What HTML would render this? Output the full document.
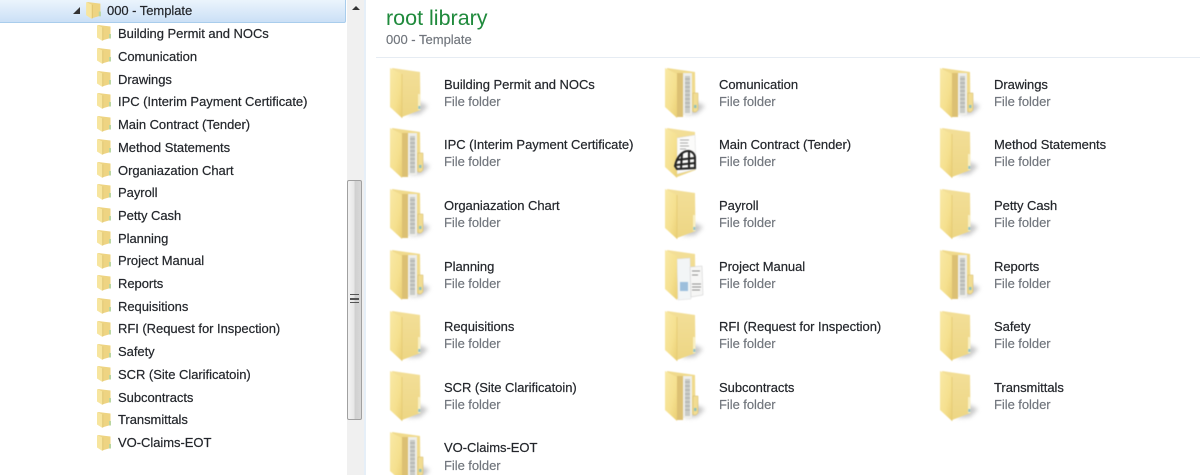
<!DOCTYPE html>
<html><head><meta charset="utf-8">
<style>
html,body{margin:0;padding:0;background:#fff;width:1200px;height:475px;overflow:hidden}
body{position:relative;font-family:"Liberation Sans",sans-serif;}
.t,.n{position:absolute;font-size:13px;line-height:16px;color:#23262b;white-space:nowrap;filter:blur(.3px);letter-spacing:-.04px;-webkit-text-stroke:.2px #23262b;margin-top:1px}
.t{left:118px}
.s{position:absolute;font-size:13px;line-height:16px;color:#70757c;white-space:nowrap;filter:blur(.3px);letter-spacing:-.05px;-webkit-text-stroke:.15px #70757c;margin-top:1px}
svg.f{position:absolute;width:48px;height:54px;filter:blur(.4px)}
svg.m{position:absolute;width:18px;height:18px;filter:blur(.3px)}
</style></head><body>
<svg width="0" height="0" style="position:absolute">
<defs>
<linearGradient id="b" x1="0" x2="0" y1="0" y2="1"><stop offset="0" stop-color="#f3df98"/><stop offset="1" stop-color="#edd684"/></linearGradient>
<linearGradient id="g" x1="0" x2="1" y1="0" y2="1"><stop offset="0" stop-color="#f9e9a6"/><stop offset=".6" stop-color="#f5e08f"/><stop offset="1" stop-color="#eacf74"/></linearGradient>
<filter id="bl" x="-50%" y="-50%" width="200%" height="200%"><feGaussianBlur stdDeviation="2.200"/></filter>
<symbol id="plain" viewBox="0 0 48 54">
<path d="M30 34L41 39L33 47L20 48Z" fill="#9a9a9a" opacity=".55" filter="url(#bl)"/>
<path d="M5 1L33 5L33.500 43L15 50Z" fill="url(#b)"/>
<rect x="31" y="27" width="2.500" height="16" fill="#f9f0c4"/><rect x="31.300" y="39" width="2" height="3" fill="#8fc0c8"/>
<path d="M3 1L15 7L15 51L3 40Z" fill="url(#g)"/>
<path d="M15 7L15 51" stroke="#e4ca74" stroke-width=".8"/>
</symbol>
<symbol id="paper" viewBox="0 0 48 54">
<path d="M32 34L43 39L35 47L22 48Z" fill="#9a9a9a" opacity=".55" filter="url(#bl)"/>
<path d="M5 1L33 5L33.500 43L15 50Z" fill="#f0da8c"/>
<rect x="15" y="6" width="6" height="44" fill="#dcc073"/>
<rect x="21" y="6" width="9" height="42" fill="#eeeeea"/>
<rect x="23" y="9" width="5" height="37" fill="#c9cbc6"/>
<path d="M23 12h5M23 16h5M23 20h5M23 24h5M23 28h5M23 32h5M23 36h5M23 40h5" stroke="#a5a7a2" stroke-width=".8"/>
<path d="M31 26h5v17l-2 2h-3z" fill="#f1dc92" stroke="#d2b868" stroke-width=".5"/><rect x="32" y="38" width="2.500" height="3" fill="#8fc0b8"/>
<path d="M3 1L15 7L15 51L3 40Z" fill="url(#g)"/>
</symbol>
<symbol id="draw" viewBox="0 0 48 54">
<path d="M5 1L33 5L33.500 43L15 50Z" fill="url(#b)"/>
<path d="M15 11L33 8L34 42L15 47Z" fill="#fbfbfa" stroke="#ddd" stroke-width=".5"/>
<path d="M18 13h9M18 16h8M18 19h9M18 22h6" stroke="#aaa" stroke-width="1"/>
<path d="M3 1L15 7L15 51L3 40Z" fill="url(#g)"/>
<g fill="none" stroke="#222" stroke-width="2">
<path d="M13 39C15 29 21 24 26 24C30 24 33 27 33 31L33 41L15 42Z"/>
<path d="M20 26L19 42M27 24L27 41M14 33L33 31M14 38L33 36"/>
</g>
</symbol>
<symbol id="docs" viewBox="0 0 48 54">
<path d="M5 1L33 5L33.500 43L15 50Z" fill="url(#b)"/>
<path d="M15 10L28 9L29 50L16 51Z" fill="#f2f5f6" stroke="#ddd" stroke-width=".5"/>
<rect x="18" y="33" width="8" height="9" fill="#9dbfdc"/>
<path d="M28 18L40 17L41 46L29 48Z" fill="#f6f6f5" stroke="#ccc" stroke-width=".5"/>
<path d="M30 22h8M30 26h6M30 35h9M30 38h9M30 41h8" stroke="#8f8f8f" stroke-width="1"/>
<path d="M3 1L15 7L15 51L3 40Z" fill="url(#g)"/>
</symbol>
<symbol id="small" viewBox="0 0 18 18">
<path d="M3 1L15.500 2.500L15.500 14L7 16.500Z" fill="#eed482"/>
<path d="M2 1L7.500 3.500V17L2 13.500Z" fill="#f7e59e"/>
<path d="M7.800 3.500V16.500" stroke="#dcc06c" stroke-width=".8"/>
<rect x="14" y="10" width="2" height="4.500" fill="#b9d6a0"/>
</symbol>
</defs>
</svg>

<!-- tree -->
<div style="position:absolute;left:-2px;top:-3px;width:346px;height:24px;border:1px solid #a9cdec;border-radius:2px;background:linear-gradient(#eef6fd,#cbe0f6)"></div>
<div style="position:absolute;left:73px;top:7px;width:0;height:0;border-left:7px solid transparent;border-bottom:7px solid #333"></div>
<svg class="m" style="left:84px;top:1px;width:19px;height:19px"><use href="#small"/></svg>
<div class="t" style="left:107px;top:2px">000 - Template</div>

<svg class="m" style="left:95px;top:24px"><use href="#small"/></svg><div class="t" style="top:25px">Building Permit and NOCs</div>
<svg class="m" style="left:95px;top:47px"><use href="#small"/></svg><div class="t" style="top:48px">Comunication</div>
<svg class="m" style="left:95px;top:70px"><use href="#small"/></svg><div class="t" style="top:71px">Drawings</div>
<svg class="m" style="left:95px;top:92px"><use href="#small"/></svg><div class="t" style="top:93px">IPC (Interim Payment Certificate)</div>
<svg class="m" style="left:95px;top:115px"><use href="#small"/></svg><div class="t" style="top:116px">Main Contract (Tender)</div>
<svg class="m" style="left:95px;top:138px"><use href="#small"/></svg><div class="t" style="top:139px">Method Statements</div>
<svg class="m" style="left:95px;top:161px"><use href="#small"/></svg><div class="t" style="top:162px">Organiazation Chart</div>
<svg class="m" style="left:95px;top:183px"><use href="#small"/></svg><div class="t" style="top:184px">Payroll</div>
<svg class="m" style="left:95px;top:206px"><use href="#small"/></svg><div class="t" style="top:207px">Petty Cash</div>
<svg class="m" style="left:95px;top:229px"><use href="#small"/></svg><div class="t" style="top:230px">Planning</div>
<svg class="m" style="left:95px;top:252px"><use href="#small"/></svg><div class="t" style="top:252px">Project Manual</div>
<svg class="m" style="left:95px;top:274px"><use href="#small"/></svg><div class="t" style="top:275px">Reports</div>
<svg class="m" style="left:95px;top:297px"><use href="#small"/></svg><div class="t" style="top:298px">Requisitions</div>
<svg class="m" style="left:95px;top:320px"><use href="#small"/></svg><div class="t" style="top:320px">RFI (Request for Inspection)</div>
<svg class="m" style="left:95px;top:343px"><use href="#small"/></svg><div class="t" style="top:343px">Safety</div>
<svg class="m" style="left:95px;top:365px"><use href="#small"/></svg><div class="t" style="top:366px">SCR (Site Clarificatoin)</div>
<svg class="m" style="left:95px;top:388px"><use href="#small"/></svg><div class="t" style="top:389px">Subcontracts</div>
<svg class="m" style="left:95px;top:411px"><use href="#small"/></svg><div class="t" style="top:411px">Transmittals</div>
<svg class="m" style="left:95px;top:434px"><use href="#small"/></svg><div class="t" style="top:434px">VO-Claims-EOT</div>

<!-- scrollbar -->
<div style="position:absolute;left:347px;top:0;width:17px;height:475px;background:#f0f0f0"></div>
<div style="position:absolute;left:352px;top:6px;width:0;height:0;border-left:4px solid transparent;border-right:4px solid transparent;border-bottom:4px solid #333"></div>
<div style="position:absolute;left:347px;top:180px;width:13px;height:238px;border:1px solid #a0a0a0;border-radius:2px;background:linear-gradient(90deg,#f2f2f2,#e8e8e8 45%,#d0d0d0 55%,#d8d8d8);filter:blur(.3px)"></div>
<div style="position:absolute;left:350px;top:294px;width:9px;height:9px;border-top:1.500px solid #555;border-bottom:1.500px solid #555;box-sizing:border-box"></div>
<div style="position:absolute;left:350px;top:298px;width:9px;height:1.500px;background:#555"></div>
<div style="position:absolute;left:364px;top:0;width:2px;height:475px;background:#e6eff8"></div>

<!-- header -->
<div style="position:absolute;left:386px;top:5px;font-size:21.500px;line-height:26px;color:#1f8a3c;white-space:nowrap;filter:blur(.3px)">root library</div>
<div class="s" style="left:386px;top:31px;letter-spacing:0">000 - Template</div>
<div style="position:absolute;left:376px;top:57px;width:824px;height:1px;background:#e6ecf3"></div>

<!-- items -->
<svg class="f" style="left:387px;top:67px"><use href="#plain"/></svg><div class="n" style="left:444px;top:76px">Building Permit and NOCs</div><div class="s" style="left:444px;top:93px">File folder</div>
<svg class="f" style="left:662px;top:67px"><use href="#paper"/></svg><div class="n" style="left:719px;top:76px">Comunication</div><div class="s" style="left:719px;top:93px">File folder</div>
<svg class="f" style="left:937px;top:67px"><use href="#paper"/></svg><div class="n" style="left:994px;top:76px">Drawings</div><div class="s" style="left:994px;top:93px">File folder</div>

<svg class="f" style="left:387px;top:127px"><use href="#paper"/></svg><div class="n" style="left:444px;top:136px">IPC (Interim Payment Certificate)</div><div class="s" style="left:444px;top:153px">File folder</div>
<svg class="f" style="left:662px;top:127px"><use href="#draw"/></svg><div class="n" style="left:719px;top:136px">Main Contract (Tender)</div><div class="s" style="left:719px;top:153px">File folder</div>
<svg class="f" style="left:937px;top:127px"><use href="#plain"/></svg><div class="n" style="left:994px;top:136px">Method Statements</div><div class="s" style="left:994px;top:153px">File folder</div>

<svg class="f" style="left:387px;top:188px"><use href="#paper"/></svg><div class="n" style="left:444px;top:197px">Organiazation Chart</div><div class="s" style="left:444px;top:214px">File folder</div>
<svg class="f" style="left:662px;top:188px"><use href="#plain"/></svg><div class="n" style="left:719px;top:197px">Payroll</div><div class="s" style="left:719px;top:214px">File folder</div>
<svg class="f" style="left:937px;top:188px"><use href="#plain"/></svg><div class="n" style="left:994px;top:197px">Petty Cash</div><div class="s" style="left:994px;top:214px">File folder</div>

<svg class="f" style="left:387px;top:249px"><use href="#paper"/></svg><div class="n" style="left:444px;top:258px">Planning</div><div class="s" style="left:444px;top:275px">File folder</div>
<svg class="f" style="left:662px;top:249px"><use href="#docs"/></svg><div class="n" style="left:719px;top:258px">Project Manual</div><div class="s" style="left:719px;top:275px">File folder</div>
<svg class="f" style="left:937px;top:249px"><use href="#paper"/></svg><div class="n" style="left:994px;top:258px">Reports</div><div class="s" style="left:994px;top:275px">File folder</div>

<svg class="f" style="left:387px;top:310px"><use href="#plain"/></svg><div class="n" style="left:444px;top:318px">Requisitions</div><div class="s" style="left:444px;top:335px">File folder</div>
<svg class="f" style="left:662px;top:310px"><use href="#plain"/></svg><div class="n" style="left:719px;top:318px">RFI (Request for Inspection)</div><div class="s" style="left:719px;top:335px">File folder</div>
<svg class="f" style="left:937px;top:310px"><use href="#plain"/></svg><div class="n" style="left:994px;top:318px">Safety</div><div class="s" style="left:994px;top:335px">File folder</div>

<svg class="f" style="left:387px;top:370px"><use href="#plain"/></svg><div class="n" style="left:444px;top:379px">SCR (Site Clarificatoin)</div><div class="s" style="left:444px;top:396px">File folder</div>
<svg class="f" style="left:662px;top:370px"><use href="#paper"/></svg><div class="n" style="left:719px;top:379px">Subcontracts</div><div class="s" style="left:719px;top:396px">File folder</div>
<svg class="f" style="left:937px;top:370px"><use href="#plain"/></svg><div class="n" style="left:994px;top:379px">Transmittals</div><div class="s" style="left:994px;top:396px">File folder</div>

<svg class="f" style="left:387px;top:431px"><use href="#paper"/></svg><div class="n" style="left:444px;top:439px">VO-Claims-EOT</div><div class="s" style="left:444px;top:457px">File folder</div>
</body></html>
